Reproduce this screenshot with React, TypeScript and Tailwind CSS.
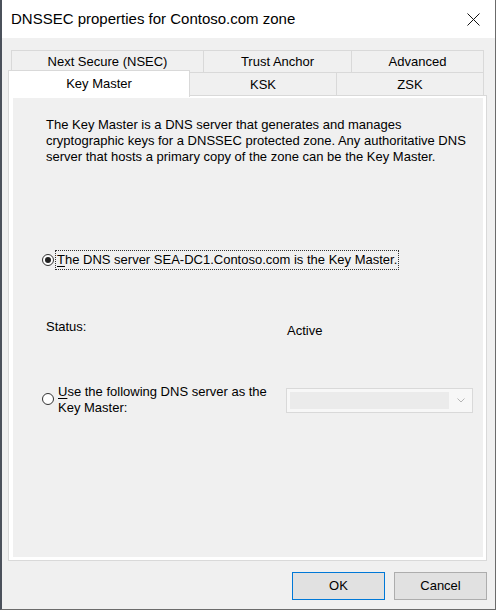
import React from "react";

function Tab({
  label,
  width,
  first,
}: {
  label: string;
  width: string;
  first?: boolean;
}) {
  return (
    <div
      className={`${width} flex h-full items-center justify-center border-t border-r border-[#d9d9d9] ${
        first ? "border-l" : ""
      }`}
    >
      {label}
    </div>
  );
}

function Radio({ checked }: { checked?: boolean }) {
  return (
    <span className="flex h-[12px] w-[12px] shrink-0 items-center justify-center rounded-full border border-[#333] bg-white">
      {checked && <span className="h-[6px] w-[6px] rounded-full bg-[#222]" />}
    </span>
  );
}

export default function App() {
  return (
    <div
      className="box-border flex h-[610px] w-[496px] flex-col border-l-[2px] border-r border-b border-l-[#4b515b] border-r-[#6b6b6b] border-b-[#6b6b6b] bg-[#f0f0f0] text-[13px] text-black"
      style={{ fontFamily: '"Liberation Sans", Arial, sans-serif' }}
    >
      {/* title bar */}
      <div className="flex h-[38px] shrink-0 items-center justify-between bg-white pl-[9px] pr-[14px]">
        <span className="text-[15px]">DNSSEC properties for Contoso.com zone</span>
        <svg width="13" height="13" viewBox="0 0 13 13" className="mr-[1px]">
          <path d="M0.5 0.5 L12.5 12.5 M12.5 0.5 L0.5 12.5" stroke="#111" strokeWidth="1" fill="none" />
        </svg>
      </div>

      {/* tabs */}
      <div className="ml-[6px] mt-[12px] flex w-[479px] flex-col">
        <div className="ml-[3px] flex h-[22px]">
          <Tab label="Next Secure (NSEC)" width="w-[193px]" first />
          <Tab label="Trust Anchor" width="w-[148px]" />
          <Tab label="Advanced" width="w-[132px]" />
        </div>
        <div className="flex h-[23px] items-start">
          <div className="relative z-10 -mt-[2px] flex h-[27px] w-[182px] items-start justify-center border-l border-t border-r border-[#d9d9d9] bg-white pt-[3px]">
            Key Master
          </div>
          <div className="flex h-[23px] w-[147px] items-center justify-center border-t border-r border-[#d9d9d9] pt-[2px]">
            KSK
          </div>
          <div className="flex h-[23px] w-[147px] items-center justify-center border-t border-r border-[#d9d9d9] pt-[2px]">
            ZSK
          </div>
        </div>

        {/* tab page */}
        <div className="h-[466px] border border-[#d9d9d9] bg-white pt-[2px] pl-[4px] pr-[3px] pb-[3px]">
          <div className="h-full bg-[#f0f0f0]">
            <p className="pl-[33px] pt-[19px] leading-[16px]">
              The Key Master is a DNS server that generates and manages
              <br />
              cryptographic keys for a DNSSEC protected zone. Any authoritative DNS
              <br />
              server that hosts a primary copy of the zone can be the Key Master.
            </p>

            <div className="mt-[85px] flex h-[20px] items-center pl-[29px]">
              <Radio checked />
              <span className="ml-[1px] flex h-[20px] items-center border border-dotted border-[#333] px-[1px] leading-[16px]">
                <span className="underline underline-offset-[2px]">T</span>he DNS server SEA-DC1.Contoso.com is the Key Master.
              </span>
            </div>

            <div className="mt-[49px] flex h-[20px] items-start pl-[33px] leading-[16px]">
              <span className="w-[241px]">Status:</span>
              <span className="mt-[4px]">Active</span>
            </div>

            <div className="mt-[45px] flex items-start pl-[29px]">
              <span className="mt-[9px]">
                <Radio />
              </span>
              <span className="ml-[4px] w-[228px] leading-[16px]">
                <span className="underline underline-offset-[2px]">U</span>se the following DNS server as the
                <br />
                Key Master:
              </span>
              <div className="mt-[4px] flex h-[25px] w-[187px] items-center border border-[#d9d9d9] bg-[#f7f7f7] pl-[3px] pr-[7px]">
                <div className="h-[17px] w-[159px] bg-[#ebebeb]" />
                <svg width="8" height="5" viewBox="0 0 8 5" className="ml-auto">
                  <path d="M0.5 0.5 L4 4 L7.5 0.5" stroke="#b5b5b5" strokeWidth="1" fill="none" />
                </svg>
              </div>
            </div>
          </div>
        </div>
      </div>

      {/* buttons */}
      <div className="mt-[11px] flex justify-end gap-[9px] pr-[8px]">
        <button className="h-[28px] w-[93px] border border-[#0078d7] bg-[#e1e1e1] outline outline-1 -outline-offset-2 outline-[#0078d7]/0">
          OK
        </button>
        <button className="h-[28px] w-[93px] border border-[#adadad] bg-[#e1e1e1]">
          Cancel
        </button>
      </div>
    </div>
  );
}
